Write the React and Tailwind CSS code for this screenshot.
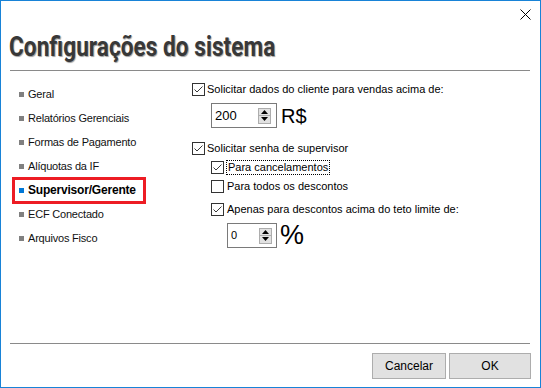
import React from "react";

function Check({ checked }) {
  return (
    <div className="w-[13px] h-[13px] border border-[#333333] bg-white flex items-center justify-center shrink-0">
      {checked && (
        <svg width="11" height="11" viewBox="0 0 11 11">
          <polyline points="1.5,5.5 4,8 9.5,2.5" fill="none" stroke="#3a3a3a" strokeWidth="1" />
        </svg>
      )}
    </div>
  );
}

function Spin() {
  return (
    <div className="flex flex-col w-[13px]">
      <div className="h-[8px] border border-[#adadad] bg-[#e1e1e1] flex items-center justify-center">
        <svg width="7" height="4" viewBox="0 0 7 4"><polygon points="0,4 3.5,0 7,4" fill="#000" /></svg>
      </div>
      <div className="h-[8px] border border-t-0 border-[#adadad] bg-[#e1e1e1] flex items-center justify-center">
        <svg width="7" height="4" viewBox="0 0 7 4"><polygon points="0,0 3.5,4 7,0" fill="#000" /></svg>
      </div>
    </div>
  );
}

const navItems = [
  "Geral",
  "Relatórios Gerenciais",
  "Formas de Pagamento",
  "Alíquotas da IF",
  "Supervisor/Gerente",
  "ECF Conectado",
  "Arquivos Fisco",
];

export default function App() {
  return (
    <div className="w-[541px] h-[388px] border border-[#1883d7] bg-white flex flex-col font-['Liberation_Sans',Arial,sans-serif] text-black overflow-hidden">
      <div className="h-[28px] flex justify-end pt-[8px] pr-[9px] shrink-0">
        <svg width="11" height="11" viewBox="0 0 11 11">
          <path d="M0.5 0.5 L10.5 10.5 M10.5 0.5 L0.5 10.5" stroke="#000" strokeWidth="1" />
        </svg>
      </div>
      <div className="h-[36px] pl-[8px] shrink-0 whitespace-nowrap">
        <span className="inline-block origin-left scale-x-[0.81] font-['Roboto',sans-serif] font-bold text-[28px] leading-[36px] text-[#383838] [text-shadow:1px_1px_1px_#a0a0a0]">
          Configurações do sistema
        </span>
      </div>
      <div className="mt-[5px] ml-[9px] mr-[10px] h-px bg-[#8a8a8a] shrink-0" />
      <div className="flex flex-1">
        <div className="w-[187px] pt-[11px] text-[11px] tracking-[-0.2px]">
          {navItems.map((item) => {
            const sel = item === "Supervisor/Gerente";
            return (
              <div key={item} className="relative h-[24px] flex items-center pl-[18px]">
                <span className={`w-[5px] h-[5px] ${sel ? "bg-[#0078d7]" : "bg-[#808080]"}`} />
                <span className={`ml-[4px] ${sel ? "font-bold text-[12px]" : "text-[#111]"}`}>{item}</span>
                {sel && (
                  <span className="absolute left-[11px] top-[-1px] w-[134px] h-[27px] border-[3px] border-[#ed1c24]" />
                )}
              </div>
            );
          })}
        </div>
        <div className="pl-[4px] text-[11px] flex flex-col">
          <div className="mt-[12px] h-[13px] flex items-center">
            <Check checked />
            <span className="ml-[2px]">Solicitar dados do cliente para vendas acima de:</span>
          </div>
          <div className="mt-[7px] ml-[19px] flex items-center">
            <div className="w-[66px] h-[25px] border border-[#7a7a7a] flex items-center justify-between pl-[3px] pr-[5px]">
              <span className="text-[13px]">200</span>
              <Spin />
            </div>
            <span className="ml-[4px] text-[20px] leading-none">R$</span>
          </div>
          <div className="mt-[14px] h-[13px] flex items-center">
            <Check checked />
            <span className="ml-[2px]">Solicitar senha de supervisor</span>
          </div>
          <div className="mt-[6px] ml-[19px] h-[13px] flex items-center">
            <Check checked />
            <span className="ml-[2px] border border-dotted border-black px-px leading-[13px]">Para cancelamentos</span>
          </div>
          <div className="mt-[6px] ml-[19px] h-[13px] flex items-center">
            <Check />
            <span className="ml-[3px]">Para todos os descontos</span>
          </div>
          <div className="mt-[10px] ml-[19px] h-[13px] flex items-center">
            <Check checked />
            <span className="ml-[3px]">Apenas para descontos acima do teto limite de:</span>
          </div>
          <div className="mt-[6px] ml-[35px] flex items-center">
            <div className="w-[50px] h-[25px] border border-[#7a7a7a] flex items-center justify-between pl-[3px] pr-[4px]">
              <span className="text-[11px]">0</span>
              <Spin />
            </div>
            <span className="ml-[3px] text-[27px] leading-none">%</span>
          </div>
        </div>
      </div>
      <div className="ml-[9px] mr-[10px] h-px bg-[#8a8a8a] shrink-0" />
      <div className="mt-[9px] mb-[8px] pr-[9px] flex justify-end gap-[3px] shrink-0">
        <button className="w-[74px] h-[26px] border border-[#adadad] bg-[#e1e1e1] text-[12px]">Cancelar</button>
        <button className="w-[82px] h-[26px] border border-[#adadad] bg-[#e1e1e1] text-[12px]">OK</button>
      </div>
    </div>
  );
}
